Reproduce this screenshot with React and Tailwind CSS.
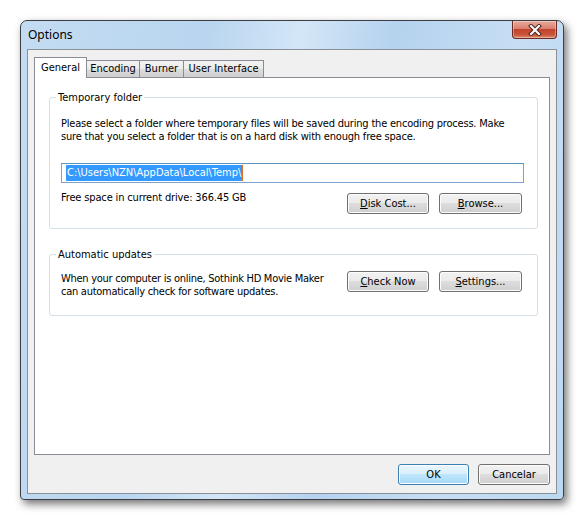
import React from 'react';

const dlgFont = { fontFamily: '"DejaVu Sans Condensed", "DejaVu Sans", sans-serif' };

const Btn = ({ children, className = '', primary = false }) => (
  <button
    className={
      'h-[21px] rounded-[3px] border text-[11px] leading-none text-black ' +
      (primary
        ? 'border-[#3c7fb1] bg-[linear-gradient(#eaf6fd_0%,#d9f0fc_45%,#bee6fd_50%,#a7d9f5_100%)] shadow-[inset_0_0_0_1px_#fff] '
        : 'border-[#707070] bg-[linear-gradient(#f2f2f2_0%,#ebebeb_45%,#dddddd_50%,#cfcfcf_100%)] shadow-[inset_0_0_0_1px_#fcfcfc] ') +
      className
    }
    style={dlgFont}
  >
    {children}
  </button>
);

const Group = ({ title, className = '', children }) => (
  <fieldset className={'rounded-[3px] border border-[#d5dfe5] ' + className}>
    <legend className="ml-[-5px] px-[2px] text-[11px] leading-[13px] text-black">{title}</legend>
    {children}
  </fieldset>
);

const tabs = ['General', 'Encoding', 'Burner', 'User Interface'];

export default function App() {
  return (
    <div className="relative h-[521px] w-[585px] overflow-hidden bg-white" style={dlgFont}>
      {/* window */}
      <div className="absolute left-[20px] top-[20px] flex h-[480px] w-[544px] flex-col rounded-t-[7px] rounded-b-[4px] border border-[#3b3f45] bg-[linear-gradient(100deg,#c3dcf3_0%,#b9d5ef_30%,#d3e6f7_45%,#b5d2ee_60%,#c6def4_80%,#bcd8f1_100%)] shadow-[3px_4px_9px_rgba(0,0,0,0.55)]">
        {/* title bar */}
        <div className="flex h-[28px] shrink-0 items-start justify-between pl-[7px] pr-[6px]">
          <span
            className="pt-[6px] text-[12px] leading-[16px] text-black"
            style={{ fontFamily: '"Noto Sans", "Open Sans", sans-serif' }}
          >
            Options
          </span>
          <div className="flex h-[18px] w-[45px] items-center justify-center rounded-b-[4px] border border-t-0 border-[#6b2a22] bg-[linear-gradient(#e9a99c_0%,#d8806f_45%,#c1432b_50%,#c8553b_80%,#e08a6b_100%)] shadow-[inset_0_0_0_1px_rgba(255,255,255,0.35)]">
            <svg width="14" height="12" viewBox="0 0 14 12">
              <path d="M3 2 L11 10 M11 2 L3 10" stroke="#4a2520" strokeWidth="4" strokeLinecap="square" />
              <path d="M3 2 L11 10 M11 2 L3 10" stroke="#ffffff" strokeWidth="2" strokeLinecap="square" />
            </svg>
          </div>
        </div>

        {/* client area */}
        <div className="mx-[6px] mb-[6px] flex flex-1 flex-col border border-[#8a9099] bg-[#f0f0f0] px-[6px] pt-[7px] pb-[8px]">
          {/* tab strip */}
          <div className="flex h-[20px] items-end">
            {tabs.map((t, i) =>
              i === 0 ? (
                <div
                  key={t}
                  className="relative z-10 -mb-px flex h-[21px] w-[53px] items-start justify-center border border-b-0 border-[#898c95] bg-white pt-[2px] text-[11px] text-black"
                >
                  {t}
                </div>
              ) : (
                <div
                  key={t}
                  className={
                    'flex h-[17px] items-center justify-center border border-l-0 border-b-0 border-[#898c95] bg-[linear-gradient(#f2f2f2_0%,#ebebeb_50%,#dddddd_51%,#cfcfcf_100%)] pt-[1px] text-[11px] text-black ' +
                    (i === 1 ? 'w-[53px]' : i === 2 ? 'w-[44px]' : 'w-[80px]')
                  }
                >
                  {t}
                </div>
              )
            )}
          </div>

          {/* tab panel */}
          <div className="flex h-[378px] flex-col border border-[#898c95] bg-white pl-[14px] pr-[11px] pt-[13px]">
            <Group title="Temporary folder" className="pl-[11px] pr-[13px] pb-[14px]">
              <p className="mt-[13px] text-[11px] leading-[13px] tracking-[-0.2px] text-black">
                Please select a folder where temporary files will be saved during the encoding process. Make
                sure that you select a folder that is on a hard disk with enough free space.
              </p>
              <div className="mt-[20px] flex h-[20px] items-center border border-[#7da2ce] border-t-[#5c93bc] bg-white pl-[4px]">
                <span className="bg-[#3399ff] px-[1px] text-[11px] leading-[16px] text-white">
                  C:\Users\NZN\AppData\Local\Temp\
                </span>
                <span className="h-[16px] w-px bg-[#e07020]" />
              </div>
              <div className="mt-[8px] flex items-start justify-between pr-[2px]">
                <span className="text-[11px] leading-[13px] tracking-[-0.15px] text-black">
                  Free space in current drive: 366.45 GB
                </span>
                <div className="mt-[2px] flex gap-[10px]">
                  <Btn className="w-[82px]">
                    <u>D</u>isk Cost...
                  </Btn>
                  <Btn className="w-[83px]">
                    <u>B</u>rowse...
                  </Btn>
                </div>
              </div>
            </Group>

            <Group title="Automatic updates" className="mt-[19px] pl-[11px] pr-[15px] pb-[17px]">
              <div className="mt-[10px] flex items-start justify-between">
                <p className="pt-[1px] text-[11px] leading-[13px] tracking-[-0.27px] text-black">
                  When your computer is online, Sothink HD Movie Maker
                  <br />
                  can automatically check for software updates.
                </p>
                <div className="flex gap-[10px]">
                  <Btn className="w-[82px]">
                    <u>C</u>heck Now
                  </Btn>
                  <Btn className="w-[83px]">
                    <u>S</u>ettings...
                  </Btn>
                </div>
              </div>
            </Group>
          </div>

          {/* dialog buttons */}
          <div className="mt-[9px] flex justify-end gap-[9px]">
            <Btn primary className="w-[71px]">
              OK
            </Btn>
            <Btn className="w-[72px]">Cancelar</Btn>
          </div>
        </div>
      </div>
    </div>
  );
}
